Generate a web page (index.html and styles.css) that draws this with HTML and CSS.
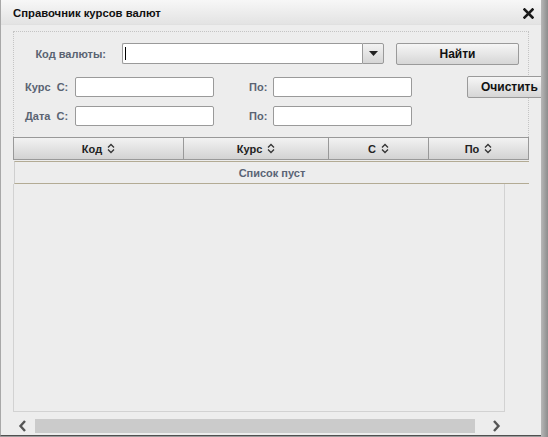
FILE: index.html
```html
<!DOCTYPE html>
<html lang="ru">
<head>
<meta charset="utf-8">
<title>Справочник курсов валют</title>
<link rel="stylesheet" href="styles.css">
</head>
<body>
<div class="page">
  <div class="dialog">
    <div class="titlebar">
      <span class="title">Справочник курсов валют</span>
      <svg class="close" width="11" height="11" viewBox="0 0 11 11"><path d="M1.5 1.5 L9.5 9.5 M9.5 1.5 L1.5 9.5" stroke="#1a1a1a" stroke-width="2.6" stroke-linecap="square"/></svg>
    </div>
    <div class="content">
      <div class="form">
        <div class="row row1">
          <label class="lbl lbl-code">Код валюты:</label>
          <div class="combo">
            <div class="combo-input"><span class="caret"></span></div>
            <div class="combo-btn"><svg width="9" height="5" viewBox="0 0 9 5"><path d="M0 0 H9 L4.5 5 Z" fill="#222"/></svg></div>
          </div>
          <button class="btn btn-find">Найти</button>
        </div>
        <div class="row row2">
          <label class="lbl lbl-from">Курс&nbsp; С:</label>
          <div class="field"></div>
          <label class="lbl lbl-to">По:</label>
          <div class="field"></div>
          <button class="btn btn-clear">Очистить</button>
        </div>
        <div class="row row3">
          <label class="lbl lbl-from">Дата&nbsp; С:</label>
          <div class="field"></div>
          <label class="lbl lbl-to">По:</label>
          <div class="field"></div>
        </div>
      </div>
      <div class="grid-head">
        <div class="th th-code">Код <svg class="sort" width="8" height="11" viewBox="0 0 8 11"><path d="M1 4.5 L4 1.5 L7 4.5 M1 6.5 L4 9.5 L7 6.5" fill="none" stroke="#333" stroke-width="1.3"/></svg></div>
        <div class="th th-rate">Курс <svg class="sort" width="8" height="11" viewBox="0 0 8 11"><path d="M1 4.5 L4 1.5 L7 4.5 M1 6.5 L4 9.5 L7 6.5" fill="none" stroke="#333" stroke-width="1.3"/></svg></div>
        <div class="th th-from">С <svg class="sort" width="8" height="11" viewBox="0 0 8 11"><path d="M1 4.5 L4 1.5 L7 4.5 M1 6.5 L4 9.5 L7 6.5" fill="none" stroke="#333" stroke-width="1.3"/></svg></div>
        <div class="th th-to">По <svg class="sort" width="8" height="11" viewBox="0 0 8 11"><path d="M1 4.5 L4 1.5 L7 4.5 M1 6.5 L4 9.5 L7 6.5" fill="none" stroke="#333" stroke-width="1.3"/></svg></div>
      </div>
      <div class="empty-row">Список пуст</div>
      <div class="grid-body"></div>
      <div class="hscroll">
        <svg class="arrow" width="9" height="12" viewBox="0 0 9 12"><path d="M7 1 L2.5 6 L7 11" fill="none" stroke="#555" stroke-width="2.4"/></svg>
        <div class="track"></div>
        <svg class="arrow" width="9" height="12" viewBox="0 0 9 12"><path d="M2 1 L6.5 6 L2 11" fill="none" stroke="#555" stroke-width="2.4"/></svg>
      </div>
    </div>
  </div>
  <div class="backdrop"></div>
</div>
</body>
</html>
```

FILE: styles.css
```css
* { box-sizing: border-box; }
html, body { margin: 0; padding: 0; }
body {
  width: 548px;
  height: 437px;
  overflow: hidden;
  font-family: "Liberation Sans", Arial, sans-serif;
  background: #9c9c9c;
}
.page {
  display: flex;
  height: 437px;
}
.dialog {
  width: 541px;
  height: 436px;
  flex: none;
  background: #ededed;
  border-left: 1px solid #a8a8a8;
  border-bottom: 1px solid #505050;
  overflow: hidden;
  display: flex;
  flex-direction: column;
}
.backdrop {
  flex: 1;
  background: linear-gradient(90deg, #b8b8b8 0, #8c8c8c 100%);
}
.titlebar {
  height: 25px;
  flex: none;
  display: flex;
  align-items: center;
  justify-content: space-between;
  padding: 0 7px 0 12px;
  background: linear-gradient(#f7f7f7, #e3e3e3);
  border-bottom: 1px solid #e0e0e0;
}
.title {
  font-size: 11.3px;
  font-weight: bold;
  color: #111;
  margin-top: 1px;
}
.close { display: block; margin-top: 2px; }
.content {
  padding: 6px 0 0 12px;
  display: flex;
  flex-direction: column;
  flex: 1;
}
.form {
  width: 516px;
  height: 106px;
  border: 1px dotted #c4c4c4;
  border-bottom: none;
  flex: none;
}
.row {
  display: flex;
  align-items: center;
}
.row > * { flex: none; }
.row1 { margin-top: 11px; height: 21px; }
.row2 { margin-top: 12px; height: 21px; }
.row3 { margin-top: 8px; height: 21px; }
.lbl {
  font-size: 11px;
  font-weight: bold;
  color: #5a6372;
  white-space: nowrap;
}
.lbl-code {
  width: 92px;
  text-align: right;
  margin-right: 16px;
}
.lbl-from {
  width: 50px;
  margin-left: 11px;
}
.lbl-to {
  width: 24px;
  margin-left: 35px;
}
.combo {
  display: flex;
  width: 262px;
  height: 21px;
}
.combo-input {
  flex: 1;
  background: #fff;
  border: 1px solid #9a9a9a;
  border-right: none;
  border-radius: 2px 0 0 2px;
  padding: 3px 2px;
}
.caret {
  display: block;
  width: 1px;
  height: 13px;
  background: #000;
}
.combo-btn {
  width: 22px;
  border: 1px solid #9a9a9a;
  border-radius: 0 2px 2px 0;
  background: linear-gradient(#f2f2f2, #d6d6d6);
  display: flex;
  align-items: center;
  justify-content: center;
}
.btn {
  height: 22px;
  border: 1px solid #9a9a9a;
  border-radius: 2px;
  background: linear-gradient(#f6f6f6, #d6d6d6);
  font-family: "Liberation Sans", Arial, sans-serif;
  font-size: 12px;
  font-weight: bold;
  color: #111;
  padding: 0;
}
.btn-find {
  width: 123px;
  margin-left: 12px;
}
.btn-clear {
  width: 80px;
  margin-left: 55px;
  text-align: left;
  padding-left: 13px;
}
.field {
  width: 139px;
  height: 20px;
  background: #fff;
  border: 1px solid #9a9a9a;
  border-radius: 2px;
}
.grid-head {
  display: flex;
  width: 516px;
  height: 23px;
  flex: none;
  border: 1px solid #999;
  background: linear-gradient(#f2f2f2, #d3d3d3);
}
.th {
  display: flex;
  align-items: center;
  justify-content: center;
  gap: 5px;
  font-size: 11px;
  font-weight: bold;
  color: #222;
  border-right: 1px solid #999;
}
.th:last-child { border-right: none; }
.th-code { width: 170px; }
.th-rate { width: 145px; }
.th-from { width: 100px; }
.th-to { flex: 1; }
.sort { display: block; }
.empty-row {
  width: 515px;
  margin-left: 1px;
  margin-top: 1px;
  height: 23px;
  flex: none;
  border-top: 1px solid #b3ab94;
  border-bottom: 1px solid #b3ab94;
  border-left: 1px solid #cfcfcf;
  display: flex;
  align-items: center;
  justify-content: center;
  font-size: 11px;
  font-weight: bold;
  color: #5a6475;
}
.grid-body {
  width: 492px;
  height: 228px;
  flex: none;
  border: 1px solid #d2d2d2;
  border-top: none;
}
.hscroll {
  display: flex;
  align-items: center;
  height: 16px;
  margin-top: 6px;
  padding-left: 5px;
}
.arrow { display: block; flex: none; }
.track {
  width: 440px;
  height: 14px;
  background: #cbcbcb;
  margin: 0 17px 0 8px;
}
```
